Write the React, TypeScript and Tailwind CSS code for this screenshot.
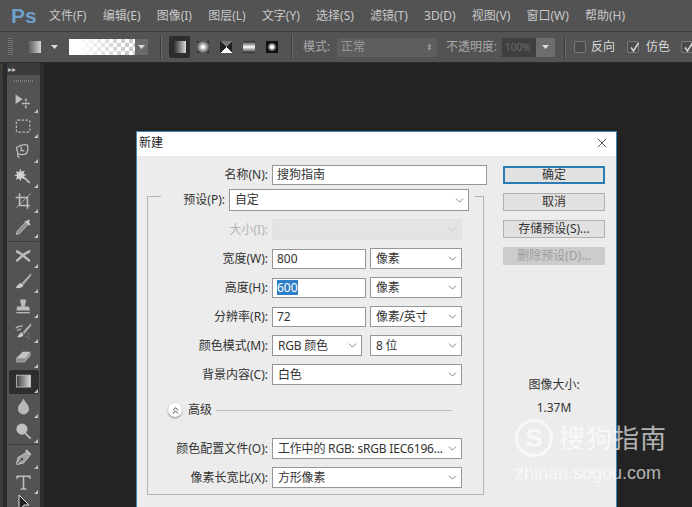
import React from 'react';
import { ChevronDown, ChevronsUp, X } from 'lucide-react';

const menuItems = ['文件(F)', '编辑(E)', '图像(I)', '图层(L)', '文字(Y)', '选择(S)', '滤镜(T)', '3D(D)', '视图(V)', '窗口(W)', '帮助(H)'];

const Caret = () => (
  <svg width="7" height="4" viewBox="0 0 7 4" className="shrink-0">
    <path d="M0 0h7L3.500 4z" fill="#dcdcdc" />
  </svg>
);

const Check = () => (
  <svg width="11" height="11" viewBox="0 0 11 11" className="absolute left-[1px] top-[0px]">
    <path d="M2 5.500L4.500 9L9.500 1" fill="none" stroke="#d8d8d8" strokeWidth="1.500" />
  </svg>
);

const Separator = () => <div className="h-[24px] w-[2px] shrink-0 border-r border-[#666] bg-[#3d3d3d]" />;

const toolIcons: React.ReactNode[] = [
  // move
  <g key="move" fill="#bdbdbd">
    <path d="M2 3l9 6-9 6z" />
    <path d="M15 10v9M11 14.500h8" stroke="#bdbdbd" strokeWidth="1.200" />
    <path d="M15 8l-1.800 2.500h3.600zM15 21l-1.800-2.500h3.600zM9.500 14.500l2.500-1.800v3.600zM20.500 14.500L18 12.700v3.600z" />
  </g>,
  // marquee
  <rect key="marquee" x="3" y="4" width="17" height="15" rx="1.500" fill="none" stroke="#bdbdbd" strokeWidth="1.500" strokeDasharray="3 2" />,
  // lasso
  <g key="lasso" fill="none" stroke="#bdbdbd" strokeWidth="1.600">
    <path d="M3 7c5-3 11-4 14-3 1 4 0 9-2 11-3 1-7 1-10 0z" />
    <path d="M9 6v5h4M5 15c-1 2 0 4 2 5" />
  </g>,
  // wand
  <g key="wand">
    <path d="M10 11l10 9" stroke="#bdbdbd" strokeWidth="2.400" />
    <path d="M8 2l1.500 4 4-1.500-1.500 4 4 1.500-4 1.500 1.500 4-4-1.500L8 18l-1.500-3.500-4 1.500 1.500-4-4-1.500 4-1.500-1.500-4 4 1.500z" fill="#d0d0d0" />
  </g>,
  // crop
  <g key="crop" fill="none" stroke="#bdbdbd">
    <path d="M7 2v15h13" strokeWidth="2" />
    <path d="M2 7h15v14" strokeWidth="2" />
    <path d="M21 2L3 20" strokeWidth="1" />
  </g>,
  // eyedropper
  <g key="eyedropper">
    <path d="M14 7L4 18l-1 4 4-1L17 10z" fill="#8f8f8f" stroke="#bdbdbd" strokeWidth="1.200" />
    <path d="M13 5l6 6 2-2-2-2 1-3-2-1-2 2z" fill="#c8c8c8" />
  </g>,
  // healing
  <g key="healing" stroke="#bdbdbd" strokeLinecap="round">
    <path d="M4 6c4 1 10 7 15 11" fill="none" strokeWidth="3" />
    <path d="M19 6C14 7 9 13 4 17" fill="none" strokeWidth="3" />
    <path d="M3 4l2 3M20 4l-2 3" strokeWidth="1.200" />
  </g>,
  // brush
  <g key="brush">
    <path d="M21 2L10 14l2 2L22 4z" fill="#b0b0b0" />
    <path d="M9 14c-3 0-4 3-7 6 4 1 8 0 10-3z" fill="#cccccc" />
  </g>,
  // stamp
  <g key="stamp" fill="#bdbdbd">
    <path d="M8 3h7v3l-1.500 6H19l1 5H3l1-5h5.500L8 6z" />
    <rect x="3" y="19" width="17" height="1.600" />
  </g>,
  // history brush
  <g key="history">
    <path d="M21 2L11 13l2 2 9-11z" fill="#b0b0b0" />
    <path d="M10 13c-2 0-3 3-6 6 3 1 7 0 8-3z" fill="#cccccc" />
    <path d="M2 8c3-3 6-3 9-3M4 11c2-1 3-2 5-2M15 18h1M18 15h1M18 20h1" stroke="#bdbdbd" strokeWidth="1.500" fill="none" />
  </g>,
  // eraser
  <g key="eraser">
    <path d="M3 14L11 6h10l-6 8H3z" fill="#c6c6c6" />
    <path d="M3 14v5h11l1-5z" fill="#8d8d8d" stroke="#bdbdbd" strokeWidth="0.800" />
    <path d="M14 19l7-8V6l-6 8z" fill="#a0a0a0" />
  </g>,
  // gradient
  <g key="gradient">
    <defs>
      <linearGradient id="toolGrad">
        <stop offset="0" stopColor="#3c3c3c" />
        <stop offset="1" stopColor="#dcdcdc" />
      </linearGradient>
    </defs>
    <rect x="3" y="4" width="18" height="15" fill="url(#toolGrad)" stroke="#c8c8c8" strokeWidth="1" />
  </g>,
  // blur
  <path key="blur" d="M12 2c2 5 7 8 7 13a7 7 0 0 1-14 0c0-5 5-8 7-13z" fill="#b8b8b8" />,
  // dodge
  <g key="dodge">
    <circle cx="10" cy="9" r="7" fill="#c0c0c0" />
    <path d="M14 14l7 7" stroke="#bdbdbd" strokeWidth="2.200" />
  </g>,
  // pen
  <g key="pen">
    <path d="M15 6l4 5-7 8-9 2 2-9z" fill="#a0a0a0" stroke="#c6c6c6" strokeWidth="1.200" />
    <path d="M16 2l6 6-2 2-6-6z" fill="#c6c6c6" />
    <circle cx="10" cy="14" r="1.500" fill="#333" />
    <path d="M3 21l6-6" stroke="#333" strokeWidth="1" />
  </g>,
  // type tool glyph
  <path key="type" d="M3 3h18v5h-1c-1-3-2-3-7-3v14l3 1v1H8v-1l3-1V5C6 5 5 5 4 8H3z" fill="#bdbdbd" />,
];

const Tool = ({ icon, active }: { icon: React.ReactNode; active?: boolean }) => (
  <div className="flex h-[25px] items-center justify-center">
    <div className={`relative flex h-[24px] w-[30px] items-center justify-center rounded-[2px] ${active ? 'bg-[#2e2e2e]' : ''}`}>
      <svg width="19" height="19" viewBox="0 0 24 24">{icon}</svg>
      <span className="absolute bottom-[1px] right-[1px] h-0 w-0 border-b-[4px] border-l-[4px] border-b-[#c4c4c4] border-l-transparent" />
    </div>
  </div>
);

const Field = ({ value, className, selected }: { value: string; className: string; selected?: boolean }) => (
  <div className={`flex h-[20px] shrink-0 items-center border border-[#969696] bg-white pl-[4px] text-[12px] text-[#333] ${className}`}>
    {selected ? <span className="bg-[#2f7fc6] leading-[15px] text-white">{value}</span> : value}
  </div>
);

const Dropdown = ({ value, className, disabled }: { value: string; className: string; disabled?: boolean }) => (
  <div className={`flex h-[21px] shrink-0 items-center justify-between border pl-[5px] pr-[2px] text-[12px] text-[#333] ${disabled ? 'border-[#e2e2e2] bg-[#e4e4e4]' : 'border-[#969696] bg-white'} ${className}`}>
    <span className="truncate tracking-[-0.2px]">{value}</span>
    <ChevronDown size={13} strokeWidth={1.5} className={`shrink-0 ${disabled ? 'text-[#bbb]' : 'text-[#666]'}`} />
  </div>
);

const Row = ({ label, disabled, children, className = '' }: { label: string; disabled?: boolean; children: React.ReactNode; className?: string }) => (
  <div className={`flex h-[21px] items-center gap-[4px] ${className}`}>
    <div className={`w-[119px] shrink-0 text-right text-[12px] ${disabled ? 'text-[#b4b4b4]' : 'text-[#333]'}`}>{label}</div>
    {children}
  </div>
);

const DialogButton = ({ label, kind }: { label: string; kind?: 'primary' | 'disabled' }) => (
  <div
    className={`flex h-[18px] items-center justify-center text-[12px] ${
      kind === 'primary'
        ? 'border-2 border-[#2b7cb3] bg-[#e1e1e1] text-[#333]'
        : kind === 'disabled'
          ? 'border border-[#cccccc] bg-[#cccccc] text-[#9c9c9c]'
          : 'border border-[#b0b0b0] bg-[#e1e1e1] text-[#333]'
    }`}
  >
    {label}
  </div>
);

export default function App() {
  return (
    <div className="relative flex h-[507px] w-[692px] flex-col overflow-hidden bg-[#232323] font-['Noto_Sans','Noto_Sans_CJK_SC',sans-serif]">
      {/* Menu bar */}
      <div className="flex h-[32px] shrink-0 items-center border-b border-[#3c3c3c] bg-[#535353] pl-[11px] text-[12px] text-[#c8c8c8]">
        <span className="mr-[17px] w-[21px] shrink-0 font-['Liberation_Sans',sans-serif] text-[21px] font-bold leading-none text-[#6d9fcc]">Ps</span>
        <div className="flex gap-[16.2px] whitespace-nowrap">
          {menuItems.map(item => (
            <span key={item}>{item}</span>
          ))}
        </div>
      </div>

      {/* Options bar */}
      <div className="flex h-[31px] shrink-0 items-center border-b border-[#2c2c2c] bg-[#535353] pl-[8px] text-[12px] text-[#cfcfcf]">
        <div className="h-[18px] w-[5px] shrink-0 bg-[repeating-linear-gradient(180deg,#777_0_1px,#4a4a4a_1px_2px)]" />
        <div className="ml-[13px] h-[12px] w-[15px] shrink-0 bg-linear-to-r from-[#444] to-[#d8d8d8]" />
        <div className="ml-[10px] shrink-0"><Caret /></div>
        <div className="ml-[11px] h-[16px] w-[66px] shrink-0 bg-[linear-gradient(90deg,#fff_15%,transparent_90%),repeating-conic-gradient(#c8c8c8_0_25%,#fff_0_50%)] bg-size-[100%_100%,8px_8px]" />
        <div className="flex h-[16px] w-[13px] shrink-0 items-center justify-center bg-[#6a6a6a]"><Caret /></div>
        <div className="ml-[12px] shrink-0"><Separator /></div>
        <div className="ml-[7px] flex h-[22px] w-[21px] shrink-0 items-center justify-center rounded-[2px] bg-[#2d2d2d]">
          <div className="h-[12px] w-[12px] bg-linear-to-r from-[#333] to-[#ddd]" />
        </div>
        <div className="ml-[7px] h-[12px] w-[12px] shrink-0 bg-[radial-gradient(circle,#fff_10%,#222_90%)]" />
        <div className="ml-[11px] h-[12px] w-[12px] shrink-0 bg-[conic-gradient(from_45deg,#222_0_25%,#fff_25%_50%,#222_50%_75%,#777_75%)]" />
        <div className="ml-[11px] h-[12px] w-[12px] shrink-0 bg-[linear-gradient(180deg,#222,#fff,#222)]" />
        <div className="ml-[11px] h-[12px] w-[12px] shrink-0 bg-[radial-gradient(circle,#fff_15%,#111_55%)]" />
        <div className="ml-[13px] shrink-0"><Separator /></div>
        <span className="ml-[10px] w-[30px] shrink-0 whitespace-nowrap text-[#a8a8a8]">模式:</span>
        <div className="ml-[4px] flex h-[19px] w-[100px] shrink-0 items-center justify-between rounded-[2px] bg-[#5e5e5e] px-[4px] text-[#9a9a9a]">
          <span>正常</span>
          <span className="text-[8px] leading-[8px]">⬍</span>
        </div>
        <span className="ml-[9px] w-[52px] shrink-0 whitespace-nowrap text-[#a8a8a8]">不透明度:</span>
        <div className="ml-[4px] flex h-[19px] w-[34px] shrink-0 items-center bg-[#3f3f3f] pl-[3px] text-[10px] text-[#6e6e6e]">100%</div>
        <div className="flex h-[19px] w-[19px] shrink-0 items-center justify-center rounded-r-[2px] bg-[#6d6d6d]"><Caret /></div>
        <div className="ml-[9px] shrink-0"><Separator /></div>
        <div className="ml-[8px] h-[12px] w-[12px] shrink-0 rounded-[2px] border border-[#7a7a7a] bg-[#4b4b4b]" />
        <span className="ml-[5px] shrink-0 text-[#d8d8d8]">反向</span>
        <div className="relative ml-[12px] h-[12px] w-[12px] shrink-0 rounded-[2px] border border-[#7a7a7a] bg-[#4b4b4b]"><Check /></div>
        <span className="ml-[7px] shrink-0 text-[#d8d8d8]">仿色</span>
        <div className="relative ml-[11px] h-[12px] w-[12px] shrink-0 rounded-[2px] border border-[#7a7a7a] bg-[#4b4b4b]"><Check /></div>
      </div>

      {/* Workspace */}
      <div className="flex min-h-0 flex-1">
        <div className="w-[7px] shrink-0 border-l-[3px] border-[#3a3a3a] bg-[#2a2a2a]" />
        <div className="w-[33px] shrink-0 bg-[#535353]">
          <div className="flex h-[12px] items-center bg-[#3a3a3a] pl-[1px] text-[8px] leading-none text-[#bbb]">▸▸</div>
          <div className="mx-auto mt-[5px] h-[2px] w-[20px] bg-[repeating-linear-gradient(90deg,#808080_0_1px,#4a4a4a_1px_2px)]" />
          <div className="mt-[7px]">
            {toolIcons.slice(0, 6).map((icon, i) => (
              <Tool key={i} icon={icon} />
            ))}
            <div className="mx-[1px] my-[2px] h-[1px] bg-[#3e3e3e]" />
            {toolIcons.slice(6, 14).map((icon, i) => (
              <Tool key={i} icon={icon} active={i === 5} />
            ))}
            <div className="mx-[1px] h-[1px] bg-[#3e3e3e]" />
            {toolIcons.slice(14).map((icon, i) => (
              <Tool key={i} icon={icon} />
            ))}
            <div className="flex h-[25px] justify-center">
              <svg width="14" height="18" viewBox="0 0 14 18"><path d="M2 0l10 10H7l-5 6z" fill="#222" stroke="#ddd" /></svg>
            </div>
          </div>
        </div>
        <div className="w-[4px] shrink-0 bg-[#2c2c2c]" />
        <div className="flex-1 bg-[#232323]" />
      </div>

      {/* New document dialog */}
      <div className="absolute left-[136px] top-[131px] h-[376px] w-[481px] border-x border-t border-[#3f87b5] bg-[#ececec]">
        <div className="flex h-[24px] items-center justify-between bg-white pb-[2px] pl-[2px] pr-[6px] text-[12px] text-[#222]">
          <span>新建</span>
          <X size={16} strokeWidth={1.2} className="text-[#333]" />
        </div>
        <div className="flex pl-[10px]">
          <div className="w-[340px] shrink-0">
            <div className="mt-[9px] flex h-[20px] items-center gap-[4px]">
              <div className="w-[121px] shrink-0 text-right text-[12px] text-[#333]">名称(N):</div>
              <Field value="搜狗指南" className="w-[215px]" />
            </div>
            <fieldset className="mt-[11px] w-[337px] border border-[#b4b4b4] px-[1px] pb-[1px]">
              <legend className="ml-[12px] h-0 w-[314px]" />
              <div className="-mt-[8px] flex h-[22px] items-center gap-[4px]">
                <div className="w-[76px] shrink-0 text-right text-[12px] text-[#333]">预设(P):</div>
                <Dropdown value="自定" className="h-[22px] w-[240px]" />
              </div>
              <Row label="大小(I):" disabled className="mt-[8px]">
                <Dropdown value="" className="w-[190px]" disabled />
              </Row>
              <Row label="宽度(W):" className="mt-[8px]">
                <Field value="800" className="w-[94px]" />
                <Dropdown value="像素" className="w-[92px]" />
              </Row>
              <Row label="高度(H):" className="mt-[8px]">
                <Field value="600" selected className="w-[94px]" />
                <Dropdown value="像素" className="w-[92px]" />
              </Row>
              <Row label="分辨率(R):" className="mt-[8px]">
                <Field value="72" className="w-[94px]" />
                <Dropdown value="像素/英寸" className="w-[92px]" />
              </Row>
              <Row label="颜色模式(M):" className="mt-[8px]">
                <Dropdown value="RGB 颜色" className="w-[90px]" />
                <Dropdown value="8 位" className="ml-[4px] w-[92px]" />
              </Row>
              <Row label="背景内容(C):" className="mt-[8px]">
                <Dropdown value="白色" className="w-[190px]" />
              </Row>
              <div className="mt-[15px] flex h-[20px] items-center pl-[19px]">
                <div className="flex h-[14px] w-[14px] shrink-0 items-center justify-center rounded-full bg-white shadow-[0_1px_2px_#888]">
                  <ChevronsUp size={11} strokeWidth={2} className="text-[#333]" />
                </div>
                <span className="ml-[6px] shrink-0 text-[12px] text-[#333]">高级</span>
                <div className="ml-[4px] h-[1px] w-[236px] bg-[#bdbdbd]" />
              </div>
              <Row label="颜色配置文件(O):" className="mt-[18px]">
                <Dropdown value="工作中的 RGB: sRGB IEC6196..." className="w-[190px]" />
              </Row>
              <Row label="像素长宽比(X):" className="mb-[5px] mt-[8px]">
                <Dropdown value="方形像素" className="w-[190px]" />
              </Row>
            </fieldset>
          </div>
          <div className="ml-[16px] w-[102px] shrink-0 pt-[10px]">
            <div className="flex flex-col gap-[9px]">
              <DialogButton label="确定" kind="primary" />
              <DialogButton label="取消" />
              <DialogButton label="存储预设(S)..." />
              <DialogButton label="删除预设(D)..." kind="disabled" />
            </div>
            <div className="mt-[111px] text-center text-[12px] text-[#333]">图像大小:</div>
            <div className="mt-[5px] text-center text-[12px] text-[#333]">1.37M</div>
          </div>
        </div>
      </div>

      {/* Watermark */}
      <div className="absolute left-[515px] top-[419px] text-white opacity-65">
        <div className="flex items-center gap-[6px]">
          <div className="flex h-[38px] w-[38px] items-center justify-center rounded-full border-[3px] border-white">
            <span className="font-['Liberation_Sans',sans-serif] text-[26px] font-bold leading-none">S</span>
          </div>
          <span className="text-[26px] leading-[38px] tracking-[1px]">搜狗指南</span>
        </div>
        <div className="mt-[5px] font-['Liberation_Sans',sans-serif] text-[18px] leading-[22px]">zhinan.sogou.com</div>
      </div>
    </div>
  );
}
